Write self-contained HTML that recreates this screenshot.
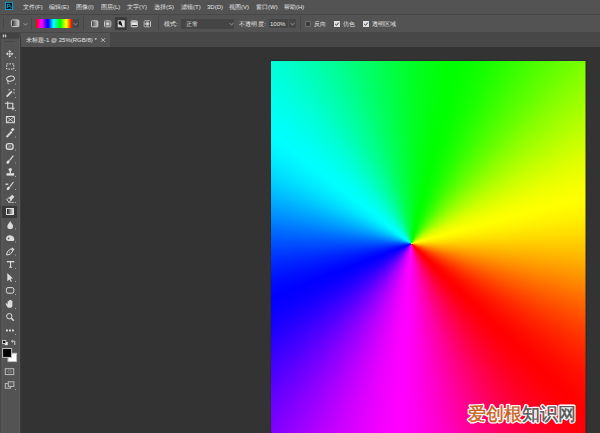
<!DOCTYPE html>
<html><head><meta charset="utf-8">
<style>
*{margin:0;padding:0;box-sizing:border-box}
html,body{width:600px;height:433px;overflow:hidden;background:#333333;font-family:"Liberation Sans",sans-serif;}
.a{position:absolute}
#menu{left:0;top:0;width:600px;height:14px;background:#535353}
#menuline{left:0;top:14px;width:600px;height:1px;background:#474747}
#opts{left:0;top:15px;width:600px;height:17px;background:#535353}
#tabbar{left:0;top:32px;width:600px;height:15px;background:#474747}
#tab{left:21px;top:33px;width:89px;height:14px;background:#535353}
#work{left:21px;top:47px;width:579px;height:386px;background:#333333}
#tbhead{left:0;top:33px;width:19px;height:5px;background:#424242}
#tbody{left:0;top:38px;width:20px;height:395px;background:#535353;border-left:1px solid #474747;border-top:1px solid #474747;border-right:1px solid #4a4a4a}
#canvas{left:271px;top:61px;width:314.5px;height:372px;overflow:hidden}
#grad{left:0;top:0;width:315px;height:372px;background:conic-gradient(from 134.0deg at 140.3px 182.6px,#ff0000 0.0deg,#ff0005 2.0deg,#ff000b 4.0deg,#ff0012 6.0deg,#ff001b 8.0deg,#ff0024 10.0deg,#ff002f 12.0deg,#ff003a 14.0deg,#ff0046 16.0deg,#ff0052 18.0deg,#ff005f 20.0deg,#ff006c 22.0deg,#ff0079 24.0deg,#ff0086 26.0deg,#ff0093 28.0deg,#ff00a0 30.0deg,#ff00ad 32.0deg,#ff00b9 34.0deg,#ff00c5 36.0deg,#ff00d0 38.0deg,#ff00db 40.0deg,#ff00e4 42.0deg,#ff00ed 44.0deg,#ff00f4 46.0deg,#ff00fa 48.0deg,#ff00ff 50.0deg,#fb00ff 52.0deg,#f700ff 54.1deg,#f200ff 56.1deg,#ec00ff 58.1deg,#e500ff 60.2deg,#de00ff 62.2deg,#d600ff 64.2deg,#ce00ff 66.2deg,#c500ff 68.3deg,#bc00ff 70.3deg,#b200ff 72.3deg,#a800ff 74.4deg,#9e00ff 76.4deg,#9400ff 78.4deg,#8a00ff 80.5deg,#8000ff 82.5deg,#7500ff 84.5deg,#6b00ff 86.6deg,#6100ff 88.6deg,#5700ff 90.6deg,#4d00ff 92.7deg,#4300ff 94.7deg,#3a00ff 96.7deg,#3100ff 98.8deg,#2900ff 100.8deg,#2100ff 102.8deg,#1a00ff 104.8deg,#1300ff 106.9deg,#0d00ff 108.9deg,#0800ff 110.9deg,#0400ff 113.0deg,#0000ff 115.0deg,#0004ff 117.0deg,#0009ff 119.0deg,#000eff 120.9deg,#0015ff 122.9deg,#001cff 124.9deg,#0024ff 126.9deg,#002dff 128.9deg,#0036ff 130.9deg,#0040ff 132.9deg,#004aff 134.8deg,#0054ff 136.8deg,#005fff 138.8deg,#0069ff 140.8deg,#0074ff 142.8deg,#0080ff 144.8deg,#008bff 146.7deg,#0096ff 148.7deg,#00a0ff 150.7deg,#00abff 152.7deg,#00b5ff 154.7deg,#00bfff 156.6deg,#00c9ff 158.6deg,#00d2ff 160.6deg,#00dbff 162.6deg,#00e3ff 164.6deg,#00eaff 166.6deg,#00f1ff 168.6deg,#00f6ff 170.5deg,#00fbff 172.5deg,#00ffff 174.5deg,#00fffb 176.5deg,#00fff7 178.5deg,#00fff2 180.5deg,#00ffec 182.4deg,#00ffe6 184.4deg,#00ffdf 186.4deg,#00ffd8 188.4deg,#00ffd0 190.4deg,#00ffc7 192.4deg,#00ffbe 194.3deg,#00ffb5 196.3deg,#00ffac 198.3deg,#00ffa2 200.3deg,#00ff98 202.3deg,#00ff8f 204.3deg,#00ff85 206.3deg,#00ff7a 208.2deg,#00ff70 210.2deg,#00ff67 212.2deg,#00ff5d 214.2deg,#00ff53 216.2deg,#00ff4a 218.2deg,#00ff41 220.2deg,#00ff38 222.1deg,#00ff2f 224.1deg,#00ff27 226.1deg,#00ff20 228.1deg,#00ff19 230.1deg,#00ff13 232.1deg,#00ff0d 234.0deg,#00ff08 236.0deg,#00ff04 238.0deg,#00ff00 240.0deg,#04ff00 242.0deg,#09ff00 244.1deg,#0eff00 246.1deg,#15ff00 248.1deg,#1cff00 250.2deg,#24ff00 252.2deg,#2dff00 254.2deg,#36ff00 256.3deg,#40ff00 258.3deg,#4aff00 260.3deg,#54ff00 262.4deg,#5fff00 264.4deg,#69ff00 266.4deg,#74ff00 268.5deg,#80ff00 270.5deg,#8bff00 272.5deg,#96ff00 274.6deg,#a0ff00 276.6deg,#abff00 278.6deg,#b5ff00 280.7deg,#bfff00 282.7deg,#c9ff00 284.7deg,#d2ff00 286.8deg,#dbff00 288.8deg,#e3ff00 290.8deg,#eaff00 292.9deg,#f1ff00 294.9deg,#f6ff00 296.9deg,#fbff00 299.0deg,#ffff00 301.0deg,#fffb00 303.0deg,#fff600 304.9deg,#fff100 306.9deg,#ffea00 308.9deg,#ffe300 310.8deg,#ffdb00 312.8deg,#ffd200 314.8deg,#ffc900 316.7deg,#ffbf00 318.7deg,#ffb500 320.7deg,#ffab00 322.6deg,#ffa000 324.6deg,#ff9600 326.6deg,#ff8b00 328.5deg,#ff8000 330.5deg,#ff7400 332.5deg,#ff6900 334.4deg,#ff5f00 336.4deg,#ff5400 338.4deg,#ff4a00 340.3deg,#ff4000 342.3deg,#ff3600 344.3deg,#ff2d00 346.2deg,#ff2400 348.2deg,#ff1c00 350.2deg,#ff1500 352.1deg,#ff0e00 354.1deg,#ff0900 356.1deg,#ff0400 358.0deg,#ff0000 360.0deg)}
#shadow{left:270px;top:60px;width:316.5px;height:373px;background:#2b2b2b}
.t{position:absolute;font-size:6px;color:#e4e4e4;white-space:nowrap;line-height:8px}
.sep{position:absolute;top:17px;width:1px;height:13px;background:#474747}
.ic{position:absolute}
svg{display:block}
</style></head><body>
<div class="a" id="menu"></div>
<div class="a" id="menuline"></div>
<div class="a" id="opts"></div>
<div class="a" id="tabbar"></div>
<div class="a" id="tab"></div>
<div class="a" id="work"></div>
<div class="a" id="tbhead"></div>
<div class="a" id="tbody"></div>
<div class="a" id="shadow"></div>
<div class="a" id="canvas"><div class="a" id="grad"></div></div>
<div class="a" style="left:585px;top:61px;width:1px;height:372px;background:rgba(43,43,43,0.5)"></div>

<!-- PS logo -->
<svg class="a" style="left:0;top:0" width="20" height="14" viewBox="0 0 20 14">
 <rect x="5.4" y="2.3" width="7.2" height="7.2" fill="#001620" stroke="#1c9ccb" stroke-width="1"/>
 <path d="M7.3 8.2 V4.2 H8.6 C9.5 4.2 9.9 4.7 9.9 5.4 C9.9 6.2 9.4 6.6 8.6 6.6 H7.6" fill="none" stroke="#22a6d8" stroke-width="0.9"/>
 <path d="M11.4 6.2 C10.9 5.9 10.2 6 10.3 6.6 C10.4 7.1 11.4 7.1 11.4 7.7 C11.4 8.3 10.6 8.4 10.2 8.1" fill="none" stroke="#22a6d8" stroke-width="0.7"/>
</svg>
<!-- menu text -->
<div class="t" style="left:23px;top:2.5px">文件(F)</div>
<div class="t" style="left:49px;top:2.5px">编辑(E)</div>
<div class="t" style="left:76px;top:2.5px">图像(I)</div>
<div class="t" style="left:101px;top:2.5px">图层(L)</div>
<div class="t" style="left:127px;top:2.5px">文字(Y)</div>
<div class="t" style="left:154px;top:2.5px">选择(S)</div>
<div class="t" style="left:181px;top:2.5px">滤镜(T)</div>
<div class="t" style="left:207px;top:2.5px">3D(D)</div>
<div class="t" style="left:229px;top:2.5px">视图(V)</div>
<div class="t" style="left:256px;top:2.5px">窗口(W)</div>
<div class="t" style="left:284px;top:2.5px">帮助(H)</div>

<!-- options bar -->
<div class="a" style="left:3px;top:18px;width:1px;height:11px;background:#474747"></div>
<svg class="a" style="left:0;top:14px" width="31" height="20" viewBox="0 14 31 20">
 <defs><linearGradient id="gi" x1="0" x2="1" y1="0" y2="0"><stop offset="0" stop-color="#1e1e1e"/><stop offset="0.3" stop-color="#5a5a5a"/><stop offset="1" stop-color="#d4d4d4"/></linearGradient></defs>
 <rect x="11.4" y="19.9" width="7.5" height="6.7" rx="1.1" fill="url(#gi)" stroke="#c8c8c8" stroke-width="1"/>
 <path d="M23.5 23.4 L25.5 25 L27.5 23.4" stroke="#adadad" stroke-width="0.8" fill="none"/>
</svg>
<div class="sep" style="left:31px"></div>
<div class="a" style="left:36px;top:18.6px;width:36px;height:9.6px;background:linear-gradient(90deg,#ff0000 0.0%,#ff001c 2.5%,#ff004a 5.0%,#ff0080 7.5%,#ff00b5 10.0%,#ff00e3 12.5%,#ff00ff 15.0%,#e300ff 18.0%,#b500ff 21.0%,#8000ff 24.0%,#4a00ff 27.0%,#1c00ff 30.0%,#0000ff 33.0%,#001cff 35.7%,#004aff 38.3%,#0080ff 41.0%,#00b5ff 43.7%,#00e3ff 46.3%,#00ffff 49.0%,#00ffe3 52.0%,#00ffb5 55.0%,#00ff80 58.0%,#00ff4a 61.0%,#00ff1c 64.0%,#00ff00 67.0%,#1cff00 69.8%,#4aff00 72.7%,#80ff00 75.5%,#b5ff00 78.3%,#e3ff00 81.2%,#ffff00 84.0%,#ffe300 86.7%,#ffb500 89.3%,#ff8000 92.0%,#ff4a00 94.7%,#ff1c00 97.3%,#ff0000 100%)"></div>
<div class="a" style="left:72.5px;top:18.6px;width:6.5px;height:9.6px;background:#454545"></div>
<svg class="ic" style="left:73px;top:22px" width="5" height="4"><path d="M0.5 1.2 L2.5 2.8 L4.5 1.2" stroke="#b0b0b0" stroke-width="0.8" fill="none"/></svg>
<div class="sep" style="left:83px"></div>
<!-- gradient type buttons -->
<svg class="a" style="left:80px;top:14px" width="80" height="20" viewBox="80 14 80 20">
 <defs>
  <linearGradient id="lg1" x1="0" x2="1" y1="0" y2="0"><stop offset="0" stop-color="#3c3c3c"/><stop offset="1" stop-color="#c4c4c4"/></linearGradient>
  <radialGradient id="rg1" cx="0.5" cy="0.5" r="0.6"><stop offset="0" stop-color="#f0f0f0"/><stop offset="0.35" stop-color="#b0b0b0"/><stop offset="1" stop-color="#3a3a3a"/></radialGradient>
  <linearGradient id="lg3" x1="0" x2="0" y1="0" y2="1"><stop offset="0" stop-color="#8a8a8a"/><stop offset="0.45" stop-color="#e6e6e6"/><stop offset="0.62" stop-color="#e6e6e6"/><stop offset="0.68" stop-color="#3a3a3a"/><stop offset="0.82" stop-color="#3a3a3a"/><stop offset="0.88" stop-color="#d8d8d8"/><stop offset="1" stop-color="#d8d8d8"/></linearGradient>
 </defs>
 <rect x="91.5" y="20.8" width="6.3" height="6" rx="0.8" fill="url(#lg1)" stroke="#c8c8c8" stroke-width="1"/>
 <rect x="104.5" y="20.8" width="6.3" height="6" rx="0.8" fill="url(#rg1)" stroke="#c0c0c0" stroke-width="1"/>
 <rect x="115" y="17.3" width="11.7" height="12.6" fill="#393939"/>
 <rect x="118.2" y="20.8" width="6" height="6" fill="#e4e4e4" stroke="#d4d4d4" stroke-width="1"/>
 <path d="M118.6 21.2 L121 21.2 L121.6 23 L122.6 26.4 L120.4 25 L118.6 24.2 Z" fill="#111"/>
 <rect x="131.2" y="20.8" width="6.2" height="6" rx="0.8" fill="url(#lg3)" stroke="#c8c8c8" stroke-width="1"/>
 <rect x="144.2" y="20.8" width="6.3" height="6" rx="0.8" fill="url(#rg1)" stroke="#c0c0c0" stroke-width="1"/>
 <path d="M144.8 21.4 h1.6 l-1.6 1.6 Z M149.9 21.4 h-1.6 l1.6 1.6 Z M144.8 26.2 h1.6 l-1.6 -1.6 Z M149.9 26.2 h-1.6 l1.6 -1.6 Z" fill="#2e2e2e"/>
</svg>
<div class="sep" style="left:158px"></div>
<div class="t" style="left:164px;top:20px">模式:</div>
<div class="a" style="left:181px;top:19px;width:53px;height:10px;background:#454545"></div>
<div class="t" style="left:186px;top:20px">正常</div>
<svg class="ic" style="left:229px;top:22px" width="5" height="4"><path d="M0.5 1.2 L2.5 2.8 L4.5 1.2" stroke="#b0b0b0" stroke-width="0.8" fill="none"/></svg>
<div class="t" style="left:238.5px;top:20px;letter-spacing:0.45px">不透明度:</div>
<div class="a" style="left:269px;top:19px;width:19px;height:9px;background:#454545"></div>
<div class="t" style="left:270px;top:20px;font-size:6px">100%</div>
<div class="a" style="left:289px;top:19px;width:7px;height:9px;background:#454545"></div>
<svg class="ic" style="left:290px;top:22px" width="5" height="4"><path d="M0.5 1.2 L2.5 2.8 L4.5 1.2" stroke="#b0b0b0" stroke-width="0.8" fill="none"/></svg>
<div class="sep" style="left:300px"></div>
<div class="a" style="left:305px;top:21px;width:6px;height:6px;border:1px solid #6c6c6c;background:#3c3c3c"></div>
<div class="t" style="left:314px;top:20px">反向</div>
<div class="a" style="left:334px;top:21px;width:6px;height:6px;background:#e0e0e0"></div>
<svg class="ic" style="left:334px;top:21px" width="6" height="6"><path d="M1.2 3 L2.5 4.3 L4.8 1.6" stroke="#333" stroke-width="1" fill="none"/></svg>
<div class="t" style="left:343px;top:20px">仿色</div>
<div class="a" style="left:363px;top:21px;width:6px;height:6px;background:#e0e0e0"></div>
<svg class="ic" style="left:363px;top:21px" width="6" height="6"><path d="M1.2 3 L2.5 4.3 L4.8 1.6" stroke="#333" stroke-width="1" fill="none"/></svg>
<div class="t" style="left:372px;top:20px">透明区域</div>

<!-- tab -->
<div class="t" style="left:26px;top:36px">未标题-1 @ 25%(RGB/8) *</div>
<svg class="a" style="left:100px;top:37px" width="7" height="7"><path d="M1.3 1.2 L5 4.9 M5 1.2 L1.3 4.9" stroke="#bdbdbd" stroke-width="1"/></svg>

<!-- toolbar -->
<div class="a" style="left:0;top:39px;width:1px;height:394px;background:#484848"></div><div class="a" style="left:1px;top:39px;width:1px;height:394px;background:#515151"></div><div class="a" style="left:2px;top:39px;width:1px;height:394px;background:#595959"></div>
<div class="a" style="left:18.5px;top:38px;width:1px;height:395px;background:#5a5a5a"></div>
<div class="a" style="left:19.5px;top:38px;width:1.5px;height:395px;background:#3a3a3a"></div>
<svg class="a" style="left:0;top:0" width="21" height="433" viewBox="0 0 21 433">
 <g fill="#cacaca">
  <path d="M2.8 34.6 H4 L4.2 35.9 L4 37.2 H2.8 Z M4.9 34.6 H6.1 L6.3 35.9 L6.1 37.2 H4.9 Z"/>
 </g>
 <rect x="5" y="41" width="10" height="1" fill="#474747"/>
 <g fill="none" stroke="#dcdcdc" stroke-width="1">
  <!-- move -->
  <path d="M9.7 51.5 V56.1 M7.3 53.8 H12.1" stroke-width="0.9" stroke="#b4b4b4"/>
  <!-- marquee -->
  <rect x="6.7" y="63.9" width="7.1" height="5.2" stroke-dasharray="1.6 1.1"/>
  <!-- lasso -->
  <ellipse cx="10.5" cy="78.6" rx="3.9" ry="2.5" transform="rotate(-12 10.5 78.6)"/>
  <path d="M8 80.8 Q7.4 82.6 8.4 84.2" stroke-width="0.9"/>
  <!-- wand -->
  <path d="M6.6 96.6 L11.8 91.3" stroke-width="1.7"/>
  <!-- crop -->
  <path d="M5 103.2 H12.8 V110.3 M7.7 101.6 V108.3 H14.6" stroke-width="1.1"/>
  <!-- frame -->
  <rect x="6.4" y="116.5" width="8" height="6.2"/>
  <path d="M6.4 116.5 L14.4 122.7 M14.4 116.5 L6.4 122.7" stroke-width="0.8"/>
  <!-- eyedropper -->
  <path d="M6.6 137 L11.8 131.6" stroke-width="2"/>
  <path d="M11.6 130.6 L13.7 128.7" stroke-width="2.4"/>
  <!-- healing -->
  <rect x="6.4" y="143.6" width="6.6" height="5.6" rx="2" stroke-width="1.4"/>
  <!-- brush -->
  <path d="M13.4 155.6 L9.6 160.4" stroke-width="1.2"/>
  <!-- history brush -->
  <path d="M5.4 184.2 H8.2" stroke-width="1.3"/>
  <path d="M13.5 182 L9.9 186.6" stroke-width="1.2"/>
  <!-- eraser -->
  <path d="M6.6 199.6 L9.2 197.6 L11.2 200.4 L8.6 201.6 Z" stroke-width="0.9"/>
  <path d="M8 202.4 H14" stroke-width="0.7"/>
  <!-- pen -->
  <path d="M6.6 255 L7.4 251.6 L10.8 248.9 L12.9 251 L10.2 254.3 Z" stroke-width="1"/>
  <path d="M11.8 248 L13.9 250.1" stroke-width="1.6"/>
  <!-- type -->
  <path d="M7.4 262.4 V261.6 H13.7 V262.4 M10.55 261.6 V267.3 M9 267.2 H12.1" stroke-width="1.1"/>
  <!-- rectangle -->
  <rect x="6.4" y="287.6" width="7.4" height="5.6" rx="1.6"/>
  <!-- zoom -->
  <circle cx="9.3" cy="316.2" r="2.7"/>
  <path d="M11.3 318.3 L13.8 320.8" stroke-width="1.6"/>
  <!-- swap -->
  <path d="M11.6 341.2 H14.8 V345" stroke-width="0.9"/>
  <path d="M12.8 339.9 L11.4 341.2 L12.8 342.5" stroke-width="0.8"/>
 </g>
 <g fill="#dcdcdc">
  <!-- move arrows -->
  <path d="M9.7 50 L11.3 51.9 L8.1 51.9 Z M9.7 57.6 L11.3 55.7 L8.1 55.7 Z M5.9 53.8 L7.9 52.2 L7.9 55.4 Z M13.5 53.8 L11.5 52.2 L11.5 55.4 Z"/>
  <rect x="8.9" y="53" width="1.6" height="1.6" fill="#c8c8c8"/>
  <!-- wand sparkles -->
  <rect x="8.6" y="89.2" width="1.2" height="1.2"/><rect x="13.3" y="89.2" width="1.2" height="1.2"/><rect x="13.5" y="92.3" width="1.1" height="1.1"/>
  <!-- brush tip -->
  <ellipse cx="8.1" cy="162" rx="2" ry="1.3" transform="rotate(-45 8.1 162)"/>
  <!-- stamp -->
  <circle cx="10.3" cy="169.6" r="1.7"/>
  <rect x="9.6" y="170.8" width="1.4" height="2.6"/>
  <rect x="6.5" y="173.2" width="7.6" height="2.4"/>
  <!-- history brush tip -->
  <ellipse cx="8.3" cy="188.3" rx="2" ry="1.3" transform="rotate(-45 8.3 188.3)"/>
  <!-- eraser body -->
  <path d="M9.2 197.6 L12.2 194.8 L14.4 196.8 L11.2 200.4 Z"/>
  <!-- blur -->
  <path d="M10.2 221 C11 223 13.1 224.4 13.1 226.2 A2.9 2.9 0 0 1 7.3 226.2 C7.3 224.4 9.4 223 10.2 221 Z"/>
  <!-- dodge -->
  <path d="M6 238.6 C6 236.2 8 235.1 10 235.2 C12.6 235.4 14.3 237.2 14.3 239.4 C14.3 240.6 13.4 241.1 12 241.1 L8.6 241.1 C7 241.1 6 240.2 6 238.6 Z"/>
  <!-- path select -->
  <path d="M7.3 273 L12.9 278.5 L10.5 278.8 L11.9 281.4 L10.9 282 L9.5 279.4 L7.3 281.2 Z"/>
  <!-- hand -->
  <path d="M7.6 301.6 C7.6 300.8 8.8 300.8 8.8 301.6 L8.8 300.6 C8.8 299.8 10 299.8 10 300.6 L10 300.4 C10 299.6 11.2 299.6 11.2 300.4 L11.2 301 C11.2 300.3 12.4 300.3 12.4 301 L12.4 305.4 C12.4 306.8 11.4 307.8 10 307.8 L9.2 307.8 C8.2 307.8 7.6 307.2 7 306.4 L5.8 304.2 C5.5 303.6 6.4 303 6.9 303.6 L7.6 304.4 Z"/>
  <!-- more -->
  <rect x="6" y="329.5" width="1.9" height="1.9"/><rect x="9" y="329.5" width="1.9" height="1.9"/><rect x="12" y="329.5" width="1.9" height="1.9"/>
 </g>
 <!-- dodge hole -->
 <circle cx="8.6" cy="238.4" r="0.9" fill="#535353"/>
 <!-- eyedropper dots -->
 <path d="M8 135.6 L8.4 135.2 M9.4 134.2 L9.8 133.8" stroke="#535353" stroke-width="0.7"/>
 <!-- healing center -->
 <rect x="8.2" y="145.2" width="3" height="2.4" fill="#8a8a8a"/>
 <!-- pen center -->
 <circle cx="9.6" cy="252" r="0.6" fill="#dcdcdc"/>
 <!-- indicators -->
 <g fill="#a6a6a6">
  <rect x="15" y="57" width="1" height="1"/><rect x="15" y="70" width="1" height="1"/><rect x="15" y="83.5" width="1" height="1"/>
  <rect x="15" y="97" width="1" height="1"/><rect x="15" y="110" width="1" height="1"/><rect x="15" y="136.5" width="1" height="1"/>
  <rect x="15" y="149.5" width="1" height="1"/><rect x="15" y="162.5" width="1" height="1"/><rect x="15" y="176" width="1" height="1"/>
  <rect x="15" y="189" width="1" height="1"/><rect x="15" y="202" width="1" height="1"/><rect x="15" y="215" width="1" height="1"/>
  <rect x="15" y="228.5" width="1" height="1"/><rect x="15" y="241.5" width="1" height="1"/><rect x="15" y="254.5" width="1" height="1"/>
  <rect x="15" y="268" width="1" height="1"/><rect x="15" y="281" width="1" height="1"/><rect x="15" y="294" width="1" height="1"/>
  <rect x="15" y="308" width="1" height="1"/><rect x="15" y="334" width="1" height="1"/><rect x="15" y="389" width="1" height="1"/>
 </g>
</svg>
<!-- gradient tool selected -->
<div class="a" style="left:2px;top:206px;width:15.3px;height:11.5px;background:#383838"></div>
<div class="a" style="left:6px;top:207.6px;width:8.3px;height:7.5px;border:1px solid #e0e0e0;background:linear-gradient(90deg,#1e1e1e,#d8d8d8)"></div>

<!-- fg/bg colors -->
<svg class="a" style="left:0;top:335px" width="20" height="60" viewBox="0 335 20 60">
 <rect x="4.6" y="342" width="3.2" height="3.1" fill="#e8e8e8"/>
 <rect x="2.5" y="340.4" width="3.3" height="3" fill="#111" stroke="#e0e0e0" stroke-width="0.8"/>
 <rect x="8" y="353.3" width="8.6" height="8.3" fill="#fff" stroke="#bdbdbd" stroke-width="1"/>
 <rect x="2.6" y="348.5" width="9" height="8.9" fill="#000" stroke="#bdbdbd" stroke-width="1"/>
 <rect x="5.3" y="368.7" width="8.4" height="5.9" fill="none" stroke="#bcbcbc" stroke-width="1"/>
 <circle cx="9.5" cy="371.6" r="1.6" fill="none" stroke="#bcbcbc" stroke-width="0.8" stroke-dasharray="0.8 0.6"/>
 <rect x="5.3" y="383.6" width="5.2" height="4.6" fill="none" stroke="#bcbcbc" stroke-width="1"/>
 <rect x="8.3" y="381.8" width="5.6" height="4.6" fill="#535353" stroke="#bcbcbc" stroke-width="1"/>
 <path d="M9.6 383.6 H12.6 M9.6 385 H12.6" stroke="#777" stroke-width="0.6"/>
</svg>

<!-- watermark -->
<svg class="a" style="left:440px;top:390px" width="160" height="43" viewBox="440 390 160 43">
 <g font-family="'Liberation Sans',sans-serif" font-size="18" font-weight="500">
  <text x="467.5" y="420" fill="#fff" stroke="#fff" stroke-width="3" stroke-linejoin="round">爱创根知识网</text>
  <text x="467.5" y="420" stroke-width="0.4"><tspan fill="#c6621c" stroke="#c6621c">爱创根</tspan><tspan fill="#585858" stroke="#585858">知识网</tspan></text>
 </g>
</svg>
</body></html>
